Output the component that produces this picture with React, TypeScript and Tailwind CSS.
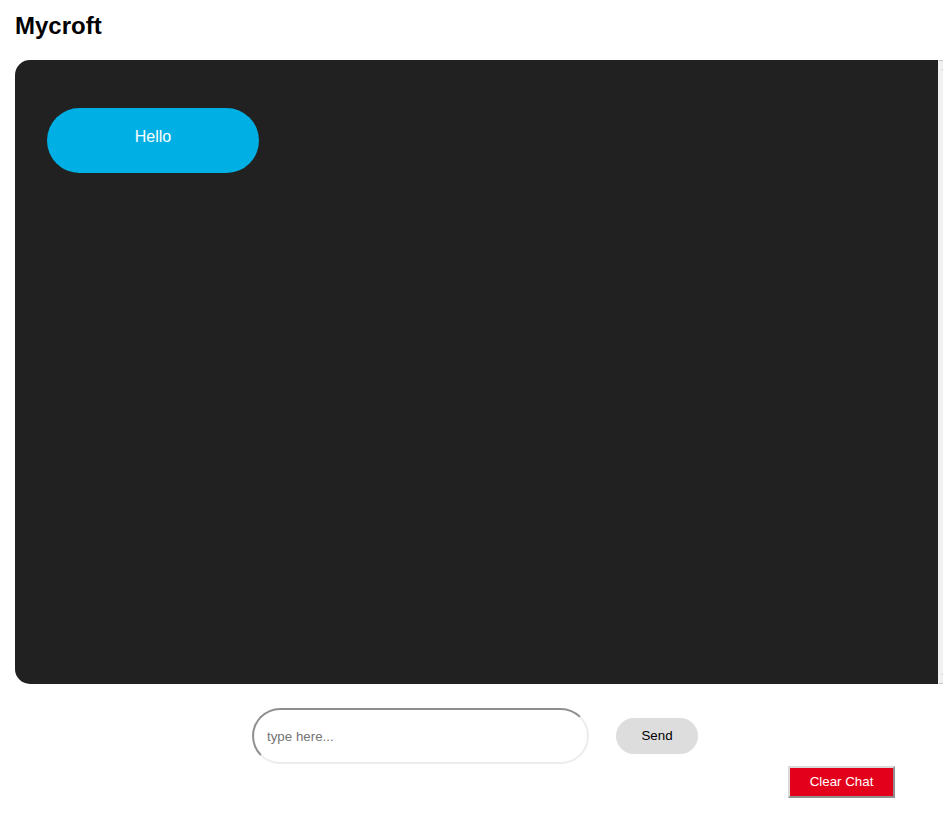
import { useState } from 'react'

type Message = { id: number; text: string }

export default function App() {
  const [messages, setMessages] = useState<Message[]>([{ id: 1, text: 'Hello' }])
  const [draft, setDraft] = useState('')

  const handleSend = () => {
    const text = draft.trim()
    if (!text) return
    setMessages((previous) => [...previous, { id: previous.length + 1, text }])
    setDraft('')
  }

  return (
    <div className="min-h-screen w-full overflow-x-hidden bg-white font-['Liberation_Sans',Arial,sans-serif] text-black">
      <h2 className="pl-[15px] pt-[12px] text-[24px] font-bold leading-[28px]">Mycroft</h2>

      {/* chat window; the last column draws the classic scrollbar track */}
      <div className="ml-[15px] mt-[20px] flex h-[624px] w-[938px] overflow-hidden rounded-[15px] bg-[#212121]">
        <div className="flex-1 overflow-y-auto px-[32px] pt-[48px] [scrollbar-width:none]">
          <div className="flex flex-col items-start gap-4">
            {messages.map((message) => (
              <div
                key={message.id}
                className="h-[65px] w-[212px] shrink-0 rounded-full bg-[#00afe3] pt-[20px] text-center text-[16px] leading-[normal] text-white"
              >
                {message.text}
              </div>
            ))}
          </div>
        </div>
        <div className="flex w-[15px] shrink-0 flex-col items-center justify-between bg-[#f1f1f1] py-[6px]">
          <span className="h-0 w-0 border-x-[4px] border-b-[4px] border-x-transparent border-b-[#a3a3a3]" />
          <span className="h-0 w-0 border-x-[4px] border-t-[4px] border-x-transparent border-t-[#a3a3a3]" />
        </div>
      </div>

      <div className="mt-[24px] flex items-center justify-center gap-[27px] pl-[7px]">
        <input
          value={draft}
          onChange={(event) => setDraft(event.target.value)}
          onKeyDown={(event) => {
            if (event.key === 'Enter') handleSend()
          }}
          placeholder="type here..."
          className="h-[56px] w-[337px] rounded-full border-2 border-b-[#ececec] border-l-[#8f8f8f] border-r-[#ececec] border-t-[#8f8f8f] bg-white pl-[13px] text-[13.33px] outline-none placeholder:text-[#757575]"
        />
        <button
          type="button"
          onClick={handleSend}
          className="h-[36px] w-[82px] rounded-full bg-[#dddddd] text-[13.33px] text-black"
        >
          Send
        </button>
      </div>

      <div className="mt-[2px] flex justify-end pr-[48px]">
        <button
          type="button"
          onClick={() => setMessages([])}
          className="h-[32px] w-[107px] border-2 border-b-[#8f8f8f] border-l-[#d9d9d9] border-r-[#8f8f8f] border-t-[#d9d9d9] bg-[#e3001b] text-[13.33px] text-white"
        >
          Clear Chat
        </button>
      </div>
    </div>
  )
}
